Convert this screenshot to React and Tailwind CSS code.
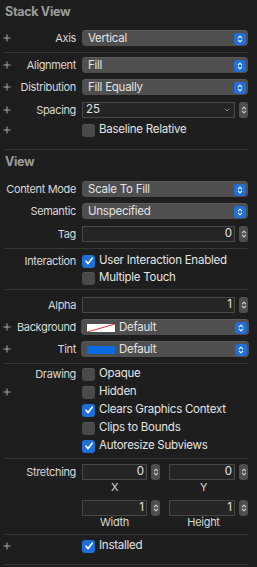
import React from "react";

const Plus = () => (
  <svg width="8" height="8" viewBox="0 0 8 8" className="shrink-0">
    <path d="M4 0.5V7.5M0.5 4H7.5" stroke="#a9a9a9" strokeWidth="1" />
  </svg>
);

const Sep = ({ className = "" }) => (
  <div className={"ml-[5px] mr-[9px] h-px bg-[#383838] " + className} />
);

const Row = ({ plus, label, children, className = "", h = "h-[16px]" }) => (
  <div className={"grid grid-cols-[82px_1fr] items-center pr-[9px] " + h + " " + className}>
    <div className="flex items-center h-full pl-[3px] pr-[6px]">
      {plus ? <Plus /> : null}
      <span className="ml-auto text-[11px] tracking-[-0.35px] text-[#d9d9d9] whitespace-nowrap leading-none">{label}</span>
    </div>
    <div className="flex items-center h-full">{children}</div>
  </div>
);

const Chev = ({ color = "#ffffff" }) => (
  <svg width="6" height="10" viewBox="0 0 6 10">
    <path d="M1.3 3.8L3 2.1L4.7 3.8M1.3 6.2L3 7.9L4.7 6.2" stroke={color} strokeWidth="1.1" fill="none" strokeLinecap="round" strokeLinejoin="round" />
  </svg>
);

const Popup = ({ children, className = "" }) => (
  <div className={"flex-1 h-[16px] rounded-[4px] bg-[#4f4f4f] border-t border-[#5c5c5c] flex items-center pl-[6px] pr-[2px] " + className}>
    <div className="flex-1 flex items-center text-[11.5px] tracking-[-0.25px] text-[#e4e4e4] leading-none whitespace-nowrap">{children}</div>
    <div className="w-[12px] h-[12px] rounded-[3px] bg-[#236fd8] flex items-center justify-center">
      <Chev />
    </div>
  </div>
);

const Stepper = () => (
  <div className="w-[9px] h-[16px] rounded-[3px] bg-[#4e4e4e] flex items-center justify-center ml-[4px]">
    <Chev color="#d0d0d0" />
  </div>
);

const Field = ({ value, align = "right", dropdown, className = "" }) => (
  <div className={"h-[16px] border border-[#474747] bg-[#252525] flex items-center text-[11.5px] text-[#e4e4e4] leading-none " + (align === "right" ? "justify-end pr-[2px]" : "pl-[3px] justify-between pr-[4px]") + " " + className}>
    <span>{value}</span>
    {dropdown ? (
      <svg width="6" height="4" viewBox="0 0 6 4">
        <path d="M0.8 0.8L3 3L5.2 0.8" stroke="#8a8a8a" strokeWidth="1" fill="none" />
      </svg>
    ) : null}
  </div>
);

const Check = ({ checked, label }) => (
  <div className="flex items-center">
    {checked ? (
      <div className="w-[13px] h-[13px] rounded-[3px] bg-[#1f6fd9] flex items-center justify-center">
        <svg width="10" height="10" viewBox="0 0 10 10">
          <path d="M2 5.2L4.1 7.6L8.2 2.2" stroke="#ffffff" strokeWidth="1.6" fill="none" strokeLinecap="round" strokeLinejoin="round" />
        </svg>
      </div>
    ) : (
      <div className="w-[13px] h-[13px] rounded-[3px] bg-[#4a4a4a] border-t border-[#575757]" />
    )}
    <span className="ml-[4px] text-[11.5px] tracking-[-0.25px] text-[#e4e4e4] leading-none whitespace-nowrap">{label}</span>
  </div>
);

const Header = ({ children }) => (
  <div className="h-[24px] flex items-center pl-[5px] text-[12.5px] tracking-[-0.3px] font-bold text-[#9c9c9c] leading-none">{children}</div>
);

export default function App() {
  return (
    <div
      className="w-[257px] h-[567px] overflow-hidden bg-[#1e1e1e] flex flex-col"
      style={{ fontFamily: "Inter, 'Noto Sans', sans-serif" }}
    >
      <Header>Stack View</Header>
      <Row plus label="Axis" className="mt-[6px]"><Popup>Vertical</Popup></Row>
      <Sep className="mt-[6px]" />
      <Row plus label="Alignment" className="mt-[4px]"><Popup>Fill</Popup></Row>
      <Row plus label="Distribution" className="mt-[6px]"><Popup>Fill Equally</Popup></Row>
      <Row plus label="Spacing" className="mt-[7px]">
        <Field value="25" align="left" dropdown className="flex-1" />
        <Stepper />
      </Row>
      <Row plus label="" h="h-[14px]" className="mt-[5px]"><Check label="Baseline Relative" /></Row>
      <Sep className="mt-[12px]" />
      <Header>View</Header>
      <Row label="Content Mode" className="mt-[7px]"><Popup>Scale To Fill</Popup></Row>
      <Row label="Semantic" className="mt-[6px]"><Popup>Unspecified</Popup></Row>
      <Row label="Tag" className="mt-[7px]">
        <Field value="0" className="flex-1" />
        <Stepper />
      </Row>
      <Sep className="mt-[6px]" />
      <Row label="Interaction" h="h-[14px]" className="mt-[5px]"><Check checked label="User Interaction Enabled" /></Row>
      <Row label="" h="h-[14px]" className="mt-[3px]"><Check label="Multiple Touch" /></Row>
      <Sep className="mt-[4px]" />
      <Row label="Alpha" className="mt-[7px]">
        <Field value="1" className="flex-1" />
        <Stepper />
      </Row>
      <Row plus label="Background" className="mt-[6px]">
        <Popup className="-ml-[1px] -mr-[1px]">
          <svg width="28" height="8" viewBox="0 0 28 8" className="mr-[4px]">
            <rect x="0" y="0" width="28" height="8" fill="#ffffff" />
            <path d="M0 8L28 0" stroke="#e8343a" strokeWidth="1" />
          </svg>
          Default
        </Popup>
      </Row>
      <Row plus label="Tint" className="mt-[6px]">
        <Popup className="-ml-[1px] -mr-[1px]">
          <div className="w-[28px] h-[8px] bg-[#0a6be0] mr-[4px]" />
          Default
        </Popup>
      </Row>
      <Sep className="mt-[6px]" />
      <Row label="Drawing" h="h-[14px]" className="mt-[3px]"><Check label="Opaque" /></Row>
      <Row plus label="" h="h-[14px]" className="mt-[4px]"><Check label="Hidden" /></Row>
      <Row label="" h="h-[14px]" className="mt-[4px]"><Check checked label="Clears Graphics Context" /></Row>
      <Row label="" h="h-[14px]" className="mt-[4px]"><Check label="Clips to Bounds" /></Row>
      <Row label="" h="h-[14px]" className="mt-[4px]"><Check checked label="Autoresize Subviews" /></Row>
      <Sep className="mt-[5px]" />
      <Row label="Stretching" className="mt-[5px]">
        <div className="flex w-[78px]">
          <Field value="0" className="flex-1" />
          <Stepper />
        </div>
        <div className="flex w-[79px] ml-[9px]">
          <Field value="0" className="flex-1" />
          <Stepper />
        </div>
      </Row>
      <div className="grid grid-cols-[82px_1fr] pr-[9px] h-[12px] mt-px">
        <div />
        <div className="flex text-[11px] tracking-[-0.3px] text-[#d9d9d9] leading-none items-center">
          <div className="w-[65px] text-center">X</div>
          <div className="w-[67px] text-center ml-[23px]">Y</div>
        </div>
      </div>
      <Row label="" className="mt-[7px]">
        <div className="flex w-[78px]">
          <Field value="1" className="flex-1" />
          <Stepper />
        </div>
        <div className="flex w-[79px] ml-[9px]">
          <Field value="1" className="flex-1" />
          <Stepper />
        </div>
      </Row>
      <div className="grid grid-cols-[82px_1fr] pr-[9px] h-[12px]">
        <div />
        <div className="flex text-[11px] tracking-[-0.3px] text-[#d9d9d9] leading-none items-center">
          <div className="w-[65px] text-center">Width</div>
          <div className="w-[67px] text-center ml-[23px]">Height</div>
        </div>
      </div>
      <Sep className="mt-[6px]" />
      <Row plus label="" h="h-[14px]" className="mt-[4px]"><Check checked label="Installed" /></Row>
      <Sep className="mt-[11px]" />
    </div>
  );
}
